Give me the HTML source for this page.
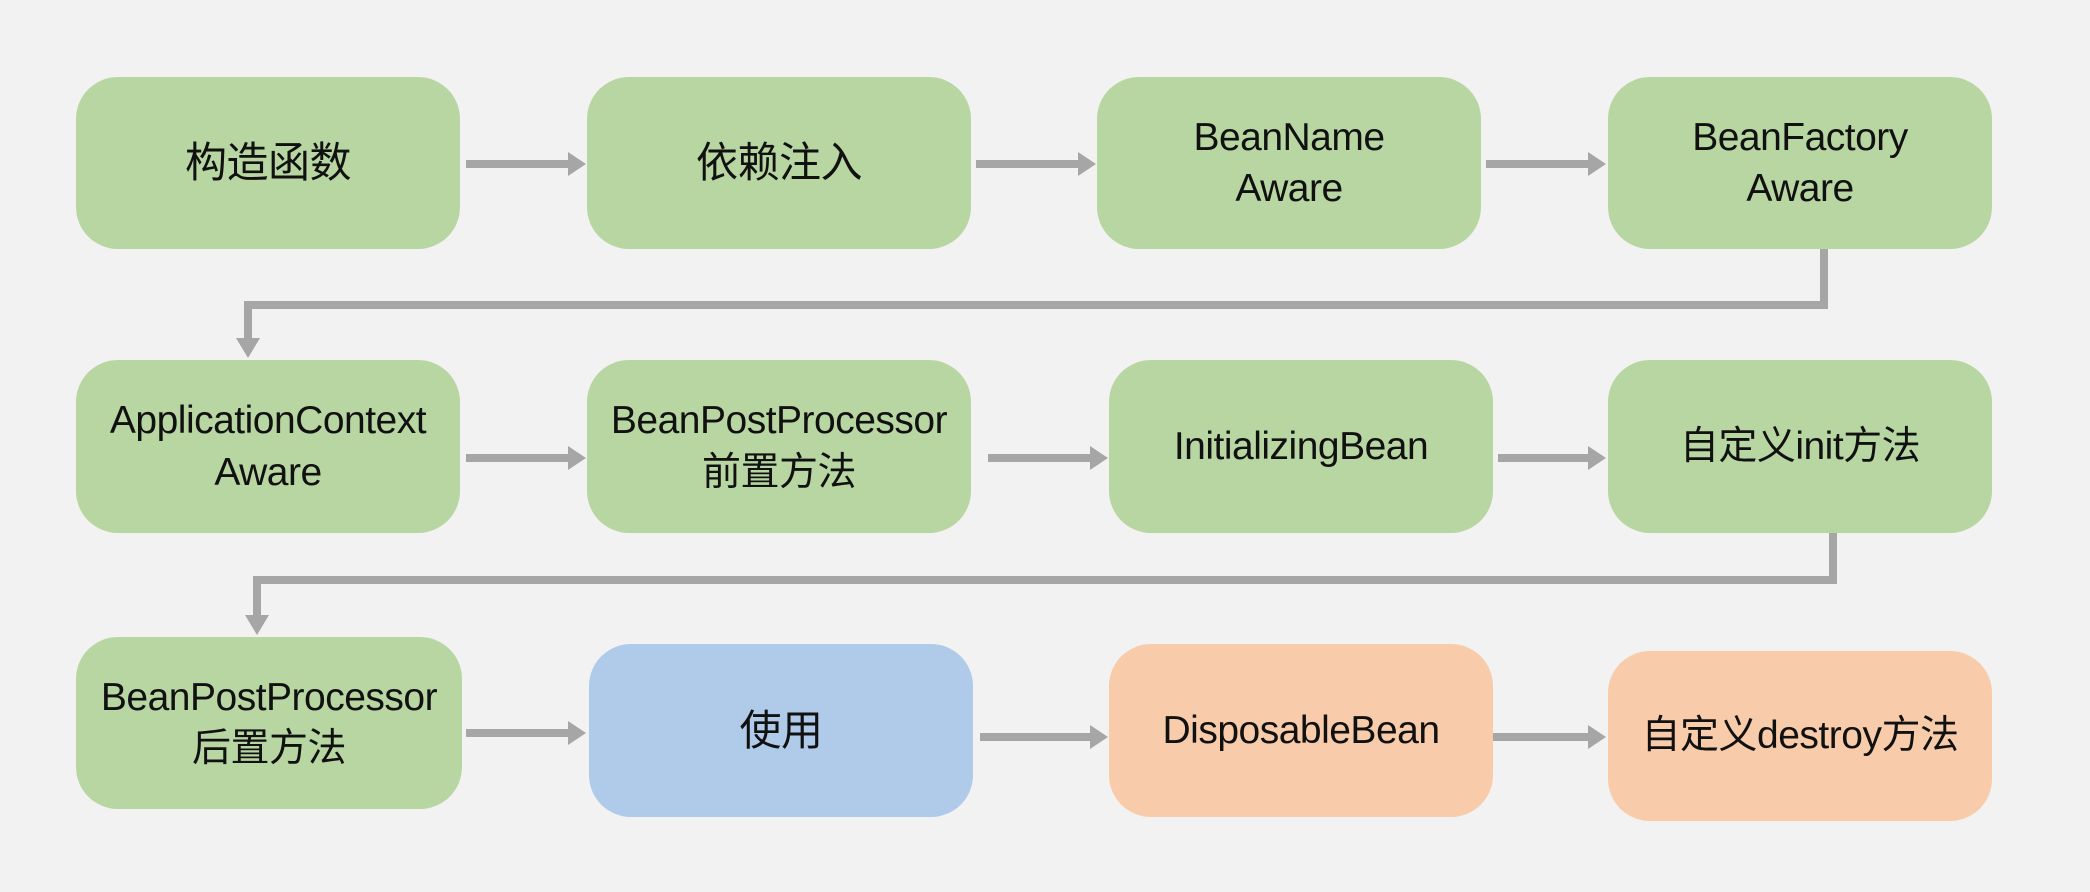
<!DOCTYPE html>
<html><head><meta charset="utf-8"><style>
body{margin:0;width:2090px;height:892px;background:#f2f2f2;position:relative;overflow:hidden;font-family:"Liberation Sans","Noto Sans CJK SC",sans-serif;}
.b{position:absolute;border-radius:42px;display:flex;align-items:center;justify-content:center;text-align:center;font-size:39px;line-height:1.32;color:#111;letter-spacing:-0.5px;}
.b span.c{font-size:42px}
.g{background:#b8d6a2}.u{background:#afcbe9}.o{background:#f8cbaa}
</style></head><body>
<svg width="2090" height="892" style="position:absolute;left:0;top:0">
<g fill="#a6a6a6">
<rect x="466" y="160" width="104" height="8"/><polygon points="568,152 586,164 568,176"/>
<rect x="976" y="160" width="104" height="8"/><polygon points="1078,152 1096,164 1078,176"/>
<rect x="1486" y="160" width="104" height="8"/><polygon points="1588,152 1606,164 1588,176"/>
<rect x="1820" y="249" width="8" height="60"/><rect x="244" y="301" width="1584" height="8"/><rect x="244" y="301" width="8" height="40"/><polygon points="236,338 260,338 248,358"/>
<rect x="466" y="454" width="104" height="8"/><polygon points="568,446 586,458 568,470"/>
<rect x="988" y="454" width="104" height="8"/><polygon points="1090,446 1108,458 1090,470"/>
<rect x="1498" y="454" width="92" height="8"/><polygon points="1588,446 1606,458 1588,470"/>
<rect x="1829" y="533" width="8" height="50"/><rect x="253" y="576" width="1584" height="8"/><rect x="253" y="576" width="8" height="42"/><polygon points="245,615 269,615 257,635"/>
<rect x="466" y="729" width="104" height="8"/><polygon points="568,721 586,733 568,745"/>
<rect x="980" y="733" width="112" height="8"/><polygon points="1090,725 1108,737 1090,749"/>
<rect x="1486" y="733" width="104" height="8"/><polygon points="1588,725 1606,737 1588,749"/>
</g></svg>
<div class="b g" style="left:76px;top:77px;width:384px;height:172px"><span class="c">构造函数</span></div>
<div class="b g" style="left:587px;top:77px;width:384px;height:172px"><span class="c">依赖注入</span></div>
<div class="b g" style="left:1097px;top:77px;width:384px;height:172px">BeanName<br>Aware</div>
<div class="b g" style="left:1608px;top:77px;width:384px;height:172px">BeanFactory<br>Aware</div>
<div class="b g" style="left:76px;top:360px;width:384px;height:173px">ApplicationContext<br>Aware</div>
<div class="b g" style="left:587px;top:360px;width:384px;height:173px">BeanPostProcessor<br>前置方法</div>
<div class="b g" style="left:1109px;top:360px;width:384px;height:173px">InitializingBean</div>
<div class="b g" style="left:1608px;top:360px;width:384px;height:173px">自定义init方法</div>
<div class="b g" style="left:76px;top:637px;width:386px;height:172px">BeanPostProcessor<br>后置方法</div>
<div class="b u" style="left:589px;top:644px;width:384px;height:173px"><span class="c">使用</span></div>
<div class="b o" style="left:1109px;top:644px;width:384px;height:173px">DisposableBean</div>
<div class="b o" style="left:1608px;top:651px;width:384px;height:170px">自定义destroy方法</div>
</body></html>
